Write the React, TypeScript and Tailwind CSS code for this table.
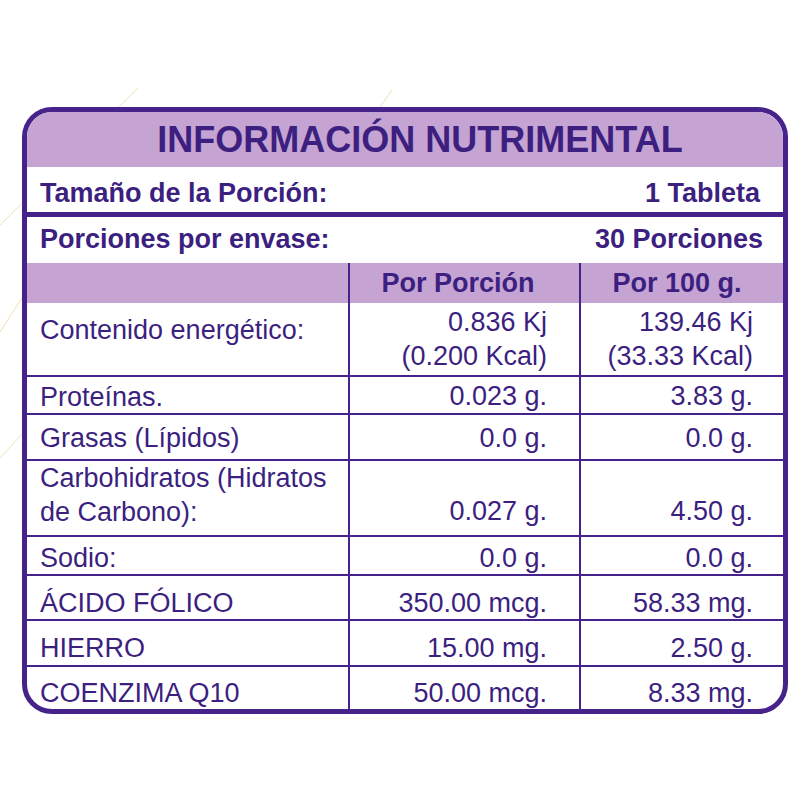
import React from 'react';

interface NutriRow {
  label: React.ReactNode;
  perServing: React.ReactNode;
  per100: React.ReactNode;
  height: string;
  labelPad: string;
  valuePad: string;
  last?: boolean;
}

const rows: NutriRow[] = [
  {
    label: 'Contenido energético:',
    perServing: (<>0.836 Kj<br />(0.200 Kcal)</>),
    per100: (<>139.46 Kj<br />(33.33 Kcal)</>),
    height: 'h-[74px]',
    labelPad: 'pt-[10px]',
    valuePad: 'pt-[2px]',
  },
  { label: 'Proteínas.', perServing: '0.023 g.', per100: '3.83 g.', height: 'h-[38px]', labelPad: 'pt-[3px]', valuePad: 'pt-[2px]' },
  { label: 'Grasas (Lípidos)', perServing: '0.0 g.', per100: '0.0 g.', height: 'h-[46px]', labelPad: 'pt-[6px]', valuePad: 'pt-[6px]' },
  {
    label: (<>Carbohidratos (Hidratos<br />de Carbono):</>),
    perServing: '0.027 g.',
    per100: '4.50 g.',
    height: 'h-[76px]',
    labelPad: 'pt-0',
    valuePad: 'pt-[33px]',
  },
  { label: 'Sodio:', perServing: '0.0 g.', per100: '0.0 g.', height: 'h-[39px]', labelPad: 'pt-[4px]', valuePad: 'pt-[4px]' },
  { label: 'ÁCIDO FÓLICO', perServing: '350.00 mcg.', per100: '58.33 mg.', height: 'h-[45px]', labelPad: 'pt-[10px]', valuePad: 'pt-[10px]' },
  { label: 'HIERRO', perServing: '15.00 mg.', per100: '2.50 g.', height: 'h-[46px]', labelPad: 'pt-[10px]', valuePad: 'pt-[10px]' },
  { label: 'COENZIMA Q10', perServing: '50.00 mcg.', per100: '8.33 mg.', height: 'h-[42px]', labelPad: 'pt-[9px]', valuePad: 'pt-[9px]', last: true },
];

export default function App() {
  return (
    <div className="relative w-[800px] h-[800px] bg-white overflow-hidden font-['Liberation_Sans',Arial,sans-serif]">
      {/* líneas decorativas del fondo */}
      <svg className="absolute inset-0" width="800" height="800" viewBox="0 0 800 800">
        <g stroke="#ecd9a0" strokeWidth="1" fill="none" opacity="0.8">
          <line x1="138" y1="88" x2="0" y2="225" />
          <line x1="392" y1="90" x2="380" y2="107" />
          <line x1="27" y1="290" x2="0" y2="332" />
          <line x1="24" y1="432" x2="0" y2="458" />
        </g>
      </svg>

      <div className="relative pt-[107px] pl-[22px]">
        <div className="w-[766px] h-[607px] border-[5px] border-[#46238a] rounded-[30px] overflow-hidden bg-white text-[#3c1f7f] flex flex-col">
          {/* título */}
          <div className="h-[55px] shrink-0 bg-[#c5a4d4] flex items-center justify-center pl-[30px] text-[36px] font-bold leading-none">
            INFORMACIÓN NUTRIMENTAL
          </div>

          <div className="h-[50px] shrink-0 border-b-[5px] border-[#46238a] flex justify-between pl-[13px] pr-[23px] pt-[9px] text-[27px] font-bold leading-[34px]">
            <span>Tamaño de la Porción:</span>
            <span>1 Tableta</span>
          </div>

          <div className="h-[46px] shrink-0 flex justify-between pl-[13px] pr-[20px] pt-[5px] text-[27px] font-bold leading-[34px]">
            <span>Porciones por envase:</span>
            <span>30 Porciones</span>
          </div>

          {/* encabezado de columnas */}
          <div className="h-[40px] shrink-0 bg-[#c5a4d4] grid grid-cols-[323px_231px_202px] text-[27px] font-bold leading-[34px]">
            <div className="border-r-2 border-[#46238a]" />
            <div className="border-r-2 border-[#46238a] pt-[3px] pr-[13px] text-center">Por Porción</div>
            <div className="pt-[3px] pr-[10px] text-center">Por 100 g.</div>
          </div>

          {rows.map((row, i) => (
            <div
              key={i}
              className={`${row.height} shrink-0 grid grid-cols-[323px_231px_202px] text-[27px] leading-[34px] ${row.last ? '' : 'border-b-2 border-[#46238a]'}`}
            >
              <div className={`border-r-2 border-[#46238a] pl-[13px] ${row.labelPad}`}>{row.label}</div>
              <div className={`border-r-2 border-[#46238a] pr-[32px] text-right ${row.valuePad}`}>{row.perServing}</div>
              <div className={`pr-[30px] text-right ${row.valuePad}`}>{row.per100}</div>
            </div>
          ))}
        </div>
      </div>
    </div>
  );
}
